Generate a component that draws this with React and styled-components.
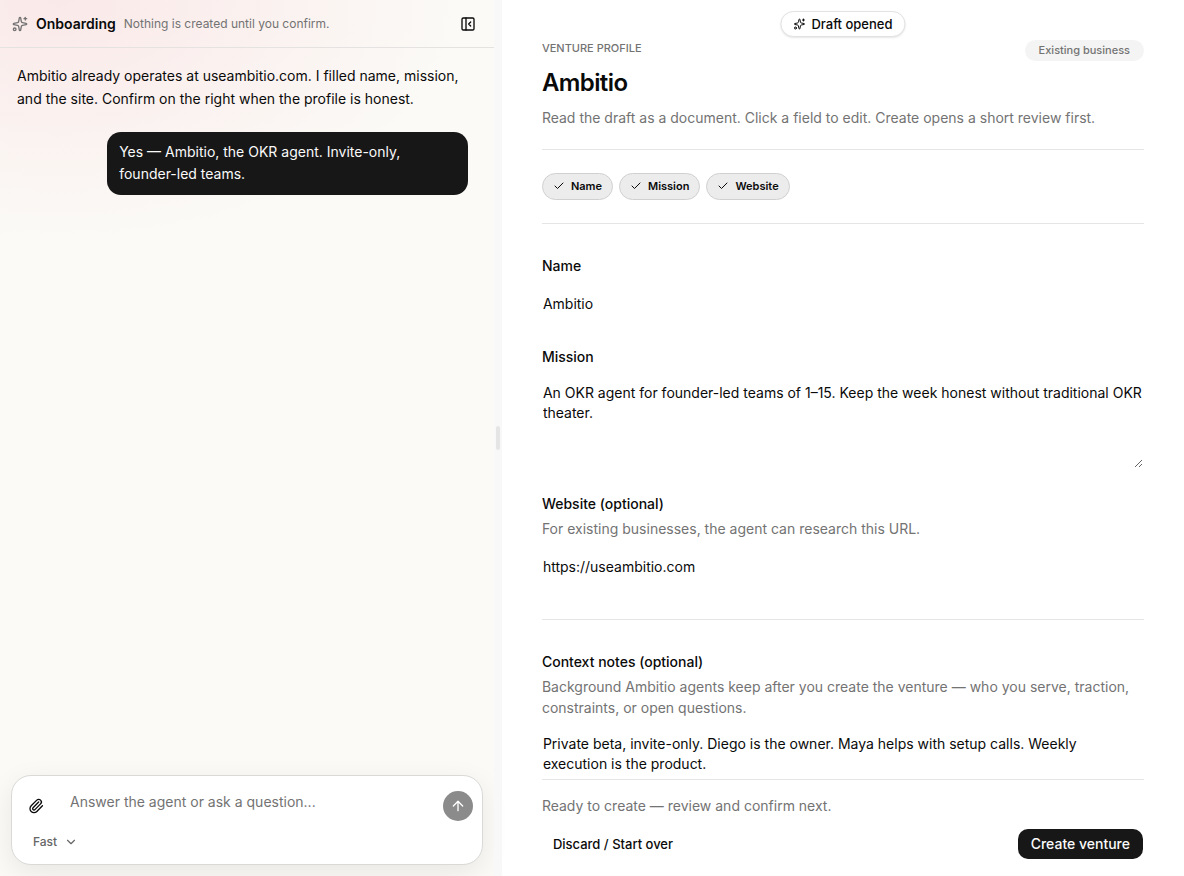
import styled, { createGlobalStyle } from "styled-components";
import {
  ArrowUp,
  Check,
  ChevronDown,
  PanelLeftClose,
  Paperclip,
  Sparkles,
} from "lucide-react";

const GlobalStyle = createGlobalStyle`
  * {
    box-sizing: border-box;
  }
  body {
    margin: 0;
    background: #fff;
    color: #0a0a0a;
    font-family: Inter, "Liberation Sans", sans-serif;
    font-size: 14px;
    line-height: 20px;
  }
  button, input, select, textarea {
    font: inherit;
    color: inherit;
  }
  h1, h2, p {
    margin: 0;
  }
`;

const Container = styled.div`
  display: grid;
  grid-template-columns: minmax(0, 42fr) 8px minmax(0, 58fr);
  grid-template-rows: minmax(0, 1fr);
  height: 100vh;
`;

const Chat = styled.section`
  display: flex;
  flex-direction: column;
  background:
    radial-gradient(ellipse 400px 240px at 12% 0, #fae9e9 0%, rgba(250, 233, 233, 0) 100%),
    #fbfaf6;
`;
const ChatHeader = styled.header`
  display: flex;
  align-items: center;
  gap: 8px;
  height: 48px;
  padding: 0 18px 0 12px;
  border-bottom: 1px solid #e5e3e2;
`;
const ChatTitle = styled.h2`
  font-size: 14px;
  font-weight: 600;
`;
const ChatHint = styled.p`
  flex: 1;
  font-size: 12px;
  color: #737373;
`;
const IconButton = styled.button`
  display: flex;
  align-items: center;
  justify-content: center;
  padding: 0;
  border: none;
  background: none;
  cursor: pointer;
`;
const Messages = styled.div`
  flex: 1;
  min-height: 0;
  display: flex;
  flex-direction: column;
  gap: 22px;
  padding: 16px 26px 0 17px;
  overflow: hidden;
`;
const AgentMessage = styled.p`
  line-height: 23px;
`;
const UserMessage = styled.p`
  align-self: flex-end;
  max-width: 80%;
  padding: 9px 12px 10px;
  border-radius: 14px;
  background: #171717;
  color: #fafafa;
  line-height: 22px;
`;

const Composer = styled.form`
  margin: 0 11px 11px;
  padding: 15px 9px 12px 16px;
  border: 1px solid #d9d9d7;
  border-radius: 20px;
  background: #fff;
  box-shadow: 0 8px 28px rgba(0, 0, 0, 0.08);
`;
const ComposerRow = styled.div`
  display: flex;
  align-items: center;
`;
const Prompt = styled.textarea`
  flex: 1;
  min-width: 0;
  height: 30px;
  margin-left: 26px;
  padding: 1px 0 9px;
  border: none;
  outline: none;
  resize: none;
  background: none;
  &::placeholder {
    color: #737373;
  }
`;
const SendButton = styled(IconButton)`
  width: 30px;
  height: 30px;
  border-radius: 50%;
  background: #8b8b8b;
  color: #fff;
`;
const Speed = styled.label`
  display: inline-flex;
  align-items: center;
  gap: 6px;
  margin: 11px 0 0 5px;
  color: #666;
`;
const SpeedSelect = styled.select`
  appearance: none;
  padding: 0;
  border: none;
  outline: none;
  background: none;
  font-size: 12px;
  font-weight: 500;
`;

const Divider = styled.div`
  display: flex;
  align-items: center;
  justify-content: center;
  background: #f8f8f8;
`;
const Grip = styled.span`
  width: 4px;
  height: 24px;
  border-radius: 2px;
  background: #e5e5e5;
`;

const Profile = styled.main`
  position: relative;
  display: flex;
  flex-direction: column;
  padding: 0 40px;
`;
const Toast = styled.div`
  position: absolute;
  top: 11px;
  left: 50%;
  transform: translateX(-50%);
  display: flex;
  align-items: center;
  gap: 6px;
  height: 26px;
  padding: 0 12px;
  border: 1px solid #e2e2e2;
  border-radius: 13px;
  background: #fff;
  box-shadow: 0 1px 2px rgba(0, 0, 0, 0.1);
  font-size: 13px;
  font-weight: 500;
  white-space: nowrap;
`;
const Document = styled.div`
  flex: 1;
  min-height: 0;
  overflow: hidden;
`;
const DocumentHeader = styled.header`
  padding: 40px 0 21px;
  border-bottom: 1px solid #e5e5e5;
`;
const Eyebrow = styled.div`
  display: flex;
  justify-content: space-between;
  align-items: flex-start;
  height: 27px;
  font-size: 11px;
  font-weight: 500;
  line-height: 17px;
  color: #737373;
`;
const Badge = styled.span`
  padding: 2px 14px;
  border-radius: 11px;
  background: #f4f4f4;
`;
const Title = styled.h1`
  margin-bottom: 9px;
  font-size: 24px;
  font-weight: 600;
  line-height: 32px;
  letter-spacing: -0.025em;
`;
const Muted = styled.p`
  color: #737373;
`;
const Chips = styled.div`
  display: flex;
  gap: 6px;
  padding: 23px 0;
`;
const Chip = styled.button`
  display: flex;
  align-items: center;
  gap: 6px;
  height: 27px;
  padding: 0 10px 1px;
  border: 1px solid #d0d0d0;
  border-radius: 14px;
  background: #ececec;
  font-size: 11px;
  font-weight: 600;
`;
const Section = styled.section`
  display: flex;
  flex-direction: column;
  gap: 25px;
  padding: 32px 0 34px;
  border-top: 1px solid #e5e5e5;
`;
const Field = styled.div`
  display: flex;
  flex-direction: column;
`;
const Label = styled.label`
  font-weight: 500;
`;
const Help = styled(Muted)`
  margin-top: 4px;
  line-height: 21px;
`;
const Input = styled.input`
  width: 100%;
  height: 36px;
  margin-top: 10px;
  padding: 0 0 2px;
  border: 1px solid transparent;
  outline: none;
  background: none;
`;
const TextArea = styled.textarea`
  width: 100%;
  height: 92px;
  margin-top: 10px;
  padding: 5px 0;
  border: 1px solid transparent;
  outline: none;
  background: none;
  resize: vertical;
`;

const Footer = styled.footer`
  padding: 16px 0 17px;
  border-top: 1px solid #e5e5e5;
`;
const Actions = styled.div`
  display: flex;
  justify-content: space-between;
  margin-top: 13px;
  padding: 0 1px;
`;
const Button = styled.button`
  height: 30px;
  padding: 0 ${(props) => (props.$primary ? "13px" : "10px")};
  border: none;
  border-radius: 10px;
  background: ${(props) => (props.$primary ? "#171717" : "none")};
  color: ${(props) => (props.$primary ? "#fafafa" : "#0a0a0a")};
  font-size: ${(props) => (props.$primary ? "14px" : "13px")};
  font-weight: 500;
  cursor: pointer;
`;

const App = () => {
  return (
    <Container>
      <GlobalStyle />
      <Chat>
        <ChatHeader>
          <Sparkles size={16} color="#737373" />
          <ChatTitle>Onboarding</ChatTitle>
          <ChatHint>Nothing is created until you confirm.</ChatHint>
          <IconButton type="button" aria-label="Collapse panel">
            <PanelLeftClose size={16} />
          </IconButton>
        </ChatHeader>
        <Messages>
          <AgentMessage>
            Ambitio already operates at useambitio.com. I filled name, mission,
            and the site. Confirm on the right when the profile is honest.
          </AgentMessage>
          <UserMessage>
            Yes — Ambitio, the OKR agent. Invite-only, founder-led teams.
          </UserMessage>
        </Messages>
        <Composer>
          <ComposerRow>
            <IconButton type="button" aria-label="Attach file">
              <Paperclip size={16} />
            </IconButton>
            <Prompt
              aria-label="Message"
              placeholder="Answer the agent or ask a question..."
            />
            <SendButton type="button" aria-label="Send">
              <ArrowUp size={16} />
            </SendButton>
          </ComposerRow>
          <Speed>
            <SpeedSelect aria-label="Speed">
              <option>Fast</option>
            </SpeedSelect>
            <ChevronDown size={14} />
          </Speed>
        </Composer>
      </Chat>
      <Divider>
        <Grip />
      </Divider>
      <Profile>
        <Document>
          <DocumentHeader>
            <Eyebrow>
              <span>VENTURE PROFILE</span>
              <Badge>Existing business</Badge>
            </Eyebrow>
            <Title>Ambitio</Title>
            <Muted>
              Read the draft as a document. Click a field to edit. Create opens
              a short review first.
            </Muted>
          </DocumentHeader>
          <Chips>
            {["Name", "Mission", "Website"].map((item) => (
              <Chip type="button" key={item}>
                <Check size={12} strokeWidth={2} />
                {item}
              </Chip>
            ))}
          </Chips>
          <Section>
            <Field>
              <Label htmlFor="name">Name</Label>
              <Input id="name" defaultValue="Ambitio" />
            </Field>
            <Field>
              <Label htmlFor="mission">Mission</Label>
              <TextArea
                id="mission"
                defaultValue="An OKR agent for founder-led teams of 1–15. Keep the week honest without traditional OKR theater."
              />
            </Field>
            <Field>
              <Label htmlFor="website">Website (optional)</Label>
              <Help>
                For existing businesses, the agent can research this URL.
              </Help>
              <Input id="website" defaultValue="https://useambitio.com" />
            </Field>
          </Section>
          <Section>
            <Field>
              <Label htmlFor="notes">Context notes (optional)</Label>
              <Help>
                Background Ambitio agents keep after you create the venture —
                who you serve, traction, constraints, or open questions.
              </Help>
              <TextArea
                id="notes"
                defaultValue="Private beta, invite-only. Diego is the owner. Maya helps with setup calls. Weekly execution is the product."
              />
            </Field>
          </Section>
        </Document>
        <Footer>
          <Muted>Ready to create — review and confirm next.</Muted>
          <Actions>
            <Button type="button">Discard / Start over</Button>
            <Button type="button" $primary>
              Create venture
            </Button>
          </Actions>
        </Footer>
        <Toast role="status">
          <Sparkles size={12} />
          Draft opened
        </Toast>
      </Profile>
    </Container>
  );
};

export default App;
